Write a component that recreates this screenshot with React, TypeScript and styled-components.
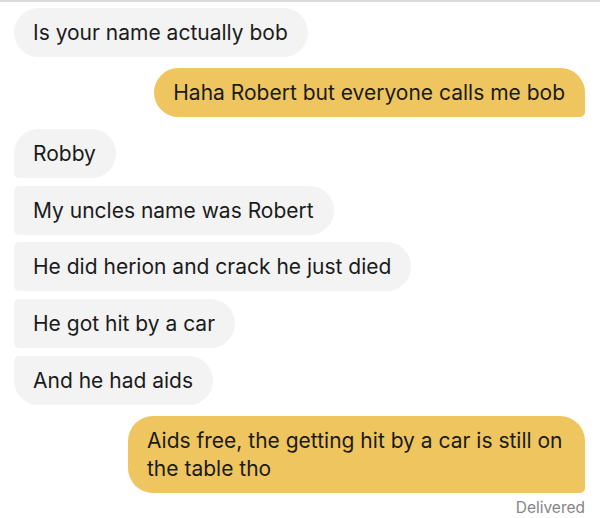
import React from 'react';
import styled, { createGlobalStyle } from 'styled-components';

type Side = 'in' | 'out';
type Pos = 'single' | 'first' | 'middle' | 'last';

type Message = {
  text: string,
  side: Side,
  pos: Pos,
  gap: number
};

const messages: Message[] = [
  { text: 'Is your name actually bob', side: 'in', pos: 'single', gap: 0 },
  { text: 'Haha Robert but everyone calls me bob', side: 'out', pos: 'single', gap: 11 },
  { text: 'Robby', side: 'in', pos: 'first', gap: 12 },
  { text: 'My uncles name was Robert', side: 'in', pos: 'middle', gap: 8 },
  { text: 'He did herion and crack he just died', side: 'in', pos: 'middle', gap: 7 },
  { text: 'He got hit by a car', side: 'in', pos: 'middle', gap: 8 },
  { text: 'And he had aids', side: 'in', pos: 'last', gap: 8 },
  { text: 'Aids free, the getting hit by a car is still on the table tho', side: 'out', pos: 'single', gap: 11 },
];

const GlobalStyle = createGlobalStyle`
  html, body {
    margin: 0;
    padding: 0;
    background: #fff;
  }
  body {
    font-family: Inter, "Noto Sans", sans-serif;
    -webkit-font-smoothing: antialiased;
  }
`;

const Screen = styled.div`
  width: 600px;
  height: 518px;
  box-sizing: border-box;
  border-top: 2px solid #dcdcdc;
  padding: 6px 15px 0 14px;
  display: flex;
  flex-direction: column;
  overflow: hidden;
`;

const Row = styled.div<{ $side: Side, $gap: number }>`
  display: flex;
  justify-content: ${p => p.$side === 'out' ? 'flex-end' : 'flex-start'};
  margin-top: ${p => p.$gap}px;
`;

const big = 25;
const small = 5;

// grouped incoming bubbles get tight corners on the avatar side
function corners(side: Side, pos: Pos) {
  const top = pos === 'single' || pos === 'first' ? big : small;
  const bottom = pos === 'last' ? big : small;
  if (side === 'in') {
    if (pos === 'single') return `${big}px`;
    return `${top}px ${big}px ${big}px ${bottom}px`;
  }
  return `${big}px ${big}px ${small}px ${big}px`;
}

const Bubble = styled.div<{ $side: Side, $pos: Pos }>`
  box-sizing: border-box;
  max-width: 457px;
  padding: 10.5px 20px 10.5px 19px;
  font-size: 21px;
  line-height: 28px;
  color: #1b1b1b;
  background: ${p => p.$side === 'out' ? '#efc55f' : '#f3f3f3'};
  border-radius: ${p => corners(p.$side, p.$pos)};
`;

const Status = styled.div`
  align-self: flex-end;
  margin-top: 6px;
  font-size: 15.5px;
  line-height: 18px;
  color: #858585;
`;

export default function App() {
  return (
    <>
      <GlobalStyle />
      <Screen>
        {messages.map((m, i) => (
          <Row key={i} $side={m.side} $gap={m.gap}>
            <Bubble $side={m.side} $pos={m.pos}>{m.text}</Bubble>
          </Row>
        ))}
        <Status>Delivered</Status>
      </Screen>
    </>
  );
}
